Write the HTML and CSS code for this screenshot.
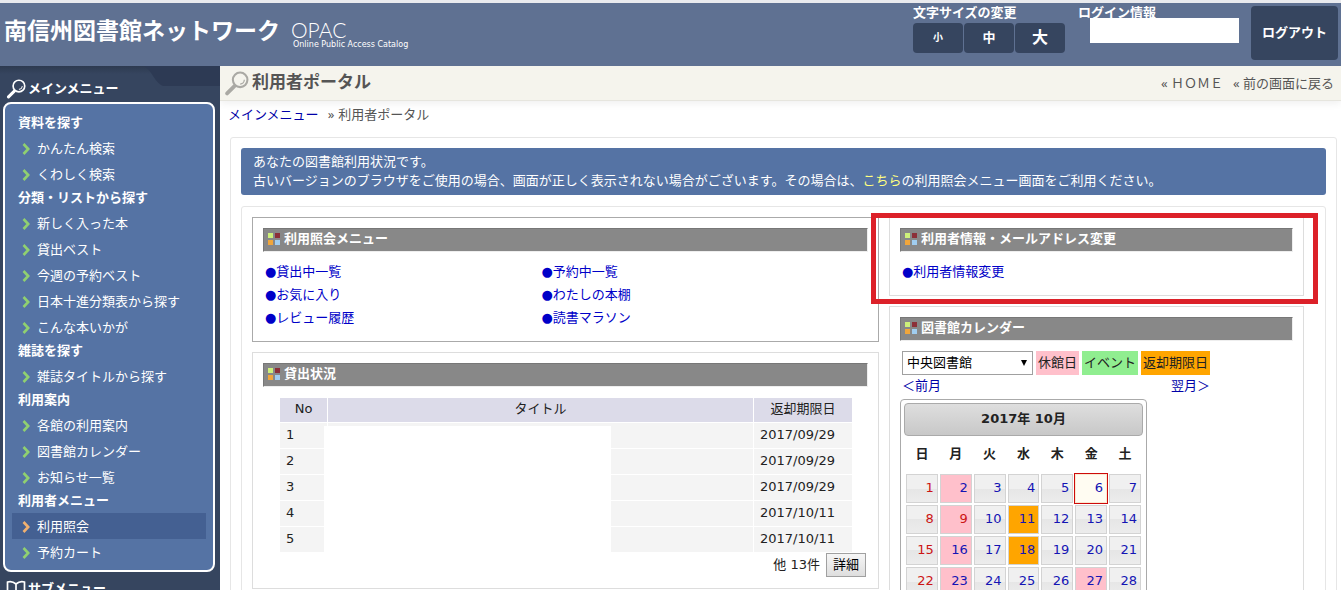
FILE: index.html
```html
<!DOCTYPE html>
<html lang="ja">
<head>
<meta charset="utf-8">
<title>利用者ポータル - 南信州図書館ネットワーク</title>
<link rel="stylesheet" href="styles.css">
</head>
<body>
<svg class="defs" width="0" height="0" aria-hidden="true">
  <symbol id="lens" viewBox="0 0 24 24">
    <circle cx="15.5" cy="8.5" r="7" fill="none" stroke="currentColor" stroke-width="2"/>
    <path d="M10 14.500 3 21.500" fill="none" stroke="currentColor" stroke-width="3.600" stroke-linecap="round"/>
    <path d="M19.500 8.500a4 4 0 0 1-4 4" fill="none" stroke="currentColor" stroke-width="1.200"/>
  </symbol>
  <symbol id="tiles" viewBox="0 0 12 12">
    <path d="M0 0h5v5H0z" fill="#cdf07a"/><path d="M7 0h5v5H7z" fill="#8c2f38"/>
    <path d="M0 7h5v5H0z" fill="#f0a63c"/><path d="M7 7h5v5H7z" fill="#a0cdf0"/>
  </symbol>
  <symbol id="chevron" viewBox="0 0 8 12">
    <path d="M1.500 1 6.200 6 1.500 11" fill="none" stroke="currentColor" stroke-width="2.600"/>
  </symbol>
</svg>

<header class="site-header">
  <h1 class="site-name">南信州図書館ネットワーク</h1>
  <div class="opac">
    <span class="opac-name">OPAC</span>
    <span class="opac-sub">Online Public Access Catalog</span>
  </div>
  <div class="font-size">
    <span class="header-label">文字サイズの変更</span>
    <div class="size-buttons">
      <button class="dark-button size-s">小</button>
      <button class="dark-button size-m">中</button>
      <button class="dark-button size-l">大</button>
    </div>
  </div>
  <div class="login">
    <span class="header-label">ログイン情報</span>
    <div class="login-name"></div>
  </div>
  <button class="dark-button logout">ログアウト</button>
</header>

<div class="layout">
  <nav class="sidebar">
    <svg class="sidebar-fold" viewBox="0 0 76 20" preserveAspectRatio="none" aria-hidden="true"><path d="M0 0h76v20H19Q14 18 9 10 5 3 0 0z" fill="#2d3a54"/></svg>
    <h2 class="menu-title"><svg class="menu-icon"><use href="#lens"/></svg>メインメニュー</h2>
    <div class="menu-box">
      <h3>資料を探す</h3>
      <ul>
        <li><a href="#"><svg><use href="#chevron"/></svg>かんたん検索</a></li>
        <li><a href="#"><svg><use href="#chevron"/></svg>くわしく検索</a></li>
      </ul>
      <h3>分類・リストから探す</h3>
      <ul>
        <li><a href="#"><svg><use href="#chevron"/></svg>新しく入った本</a></li>
        <li><a href="#"><svg><use href="#chevron"/></svg>貸出ベスト</a></li>
        <li><a href="#"><svg><use href="#chevron"/></svg>今週の予約ベスト</a></li>
        <li><a href="#"><svg><use href="#chevron"/></svg>日本十進分類表から探す</a></li>
        <li><a href="#"><svg><use href="#chevron"/></svg>こんな本いかが</a></li>
      </ul>
      <h3>雑誌を探す</h3>
      <ul>
        <li><a href="#"><svg><use href="#chevron"/></svg>雑誌タイトルから探す</a></li>
      </ul>
      <h3>利用案内</h3>
      <ul>
        <li><a href="#"><svg><use href="#chevron"/></svg>各館の利用案内</a></li>
        <li><a href="#"><svg><use href="#chevron"/></svg>図書館カレンダー</a></li>
        <li><a href="#"><svg><use href="#chevron"/></svg>お知らせ一覧</a></li>
      </ul>
      <h3>利用者メニュー</h3>
      <ul>
        <li><a href="#" class="active"><svg><use href="#chevron"/></svg>利用照会</a></li>
        <li><a href="#"><svg><use href="#chevron"/></svg>予約カート</a></li>
      </ul>
    </div>
    <h2 class="menu-title sub-title"><svg class="menu-icon" viewBox="0 0 20 20" fill="none" stroke="currentColor" stroke-width="1.700"><path d="M10 5Q6 1.500 1.500 3v13Q6 14.500 10 18 14 14.500 18.500 16V3Q14 1.500 10 5zM10 5v13"/></svg>サブメニュー</h2>
  </nav>

  <main class="main">
    <div class="page-head">
      <svg class="page-icon"><use href="#lens"/></svg>
      <h2>利用者ポータル</h2>
      <div class="page-links"><a href="#">« ＨＯＭＥ</a><a href="#">« 前の画面に戻る</a></div>
    </div>
    <div class="breadcrumb"><a href="#">メインメニュー</a><span>»</span>利用者ポータル</div>

    <div class="frame">
      <p class="notice">あなたの図書館利用状況です。<br>古いバージョンのブラウザをご使用の場合、画面が正しく表示されない場合がございます。その場合は、<a href="#">こちら</a>の利用照会メニュー画面をご利用ください。</p>

      <div class="columns">
        <div class="col-left">
          <section class="panel panel-strong">
            <h3 class="bar"><svg><use href="#tiles"/></svg>利用照会メニュー</h3>
            <ul class="links two">
              <li><a href="#">●貸出中一覧</a></li><li><a href="#">●予約中一覧</a></li>
              <li><a href="#">●お気に入り</a></li><li><a href="#">●わたしの本棚</a></li>
              <li><a href="#">●レビュー履歴</a></li><li><a href="#">●読書マラソン</a></li>
            </ul>
          </section>
          <section class="panel">
            <h3 class="bar"><svg><use href="#tiles"/></svg>貸出状況</h3>
            <div class="loans">
              <table>
                <thead><tr><th class="c-no">No</th><th>タイトル</th><th class="c-date">返却期限日</th></tr></thead>
                <tbody>
                  <tr><td>1</td><td></td><td>2017/09/29</td></tr>
                  <tr><td>2</td><td></td><td>2017/09/29</td></tr>
                  <tr><td>3</td><td></td><td>2017/09/29</td></tr>
                  <tr><td>4</td><td></td><td>2017/10/11</td></tr>
                  <tr><td>5</td><td></td><td>2017/10/11</td></tr>
                </tbody>
              </table>
              <div class="blank"></div>
            </div>
            <div class="more">他 13件<button class="plain-button">詳細</button></div>
          </section>
        </div>

        <div class="col-right">
          <section class="panel marked">
            <h3 class="bar"><svg><use href="#tiles"/></svg>利用者情報・メールアドレス変更</h3>
            <ul class="links"><li><a href="#">●利用者情報変更</a></li></ul>
            <div class="marker"></div>
          </section>
          <section class="panel">
            <h3 class="bar"><svg><use href="#tiles"/></svg>図書館カレンダー</h3>
            <div class="calendar-tools">
              <div class="select-wrap">
                <select aria-label="図書館"><option>中央図書館</option></select>
                <span class="arrow" aria-hidden="true"></span>
              </div>
              <span class="tag closed">休館日</span>
              <span class="tag event">イベント</span>
              <span class="tag due">返却期限日</span>
            </div>
            <div class="month-nav"><a href="#">＜前月</a><a href="#">翌月＞</a></div>
            <div class="calendar">
              <div class="month">2017年 10月</div>
              <table>
                <thead><tr><th>日</th><th>月</th><th>火</th><th>水</th><th>木</th><th>金</th><th>土</th></tr></thead>
                <tbody>
                  <tr><td class="sun">1</td><td class="closed">2</td><td>3</td><td>4</td><td>5</td><td class="today">6</td><td>7</td></tr>
                  <tr><td class="sun">8</td><td class="closed sun">9</td><td>10</td><td class="due">11</td><td>12</td><td>13</td><td>14</td></tr>
                  <tr><td class="sun">15</td><td class="closed">16</td><td>17</td><td class="due">18</td><td>19</td><td>20</td><td>21</td></tr>
                  <tr><td class="sun">22</td><td class="closed">23</td><td>24</td><td>25</td><td>26</td><td class="closed">27</td><td>28</td></tr>
                </tbody>
              </table>
            </div>
          </section>
        </div>
      </div>
    </div>
  </main>
</div>
</body>
</html>
```
FILE: styles.css
```css
* { box-sizing: border-box; }

body {
  margin: 0;
  height: 100vh;
  overflow: hidden;
  display: flex;
  flex-direction: column;
  background: #fff;
  color: #222;
  font: 13px/20px "DejaVu Sans", "Noto Sans CJK JP", sans-serif;
}

h1, h2, h3, p, ul { margin: 0; padding: 0; }
ul { list-style: none; }
a { color: #0000a8; text-decoration: none; }
button, select { font: inherit; }
.defs { position: absolute; }

/* Header */
.site-header {
  position: relative;
  z-index: 1;
  flex: none;
  display: flex;
  align-items: flex-start;
  height: 66px;
  padding: 0 3px 0 4px;
  border-top: 3px solid #e9eaee;
  background: #5f7192;
  color: #fff;
}
.site-name { padding-top: 12px; font-size: 23px; line-height: 32px; white-space: nowrap; }
.opac { display: flex; flex-direction: column; padding: 16px 0 0 11px; white-space: nowrap; }
.opac-name { font: 300 21px/21px Lato, sans-serif; }
.opac-sub { padding-left: 2px; font: 8px/10px "DejaVu Sans", sans-serif; }
.header-label { display: block; font-weight: bold; line-height: 20px; }
.font-size { margin-left: auto; }
.size-buttons { display: flex; gap: 1px; }
.dark-button {
  border: 0;
  border-radius: 4px;
  padding: 0;
  background: #36455f;
  color: #fff;
  font-weight: bold;
}
.size-buttons .dark-button { width: 50px; height: 30px; }
.size-buttons .size-s { font-size: 10px; }
.size-buttons .size-m { font-size: 13px; }
.size-buttons .size-l { font-size: 16px; }
.login { width: 161px; margin: 0 12px 0 13px; }
.login .header-label { height: 15px; }
.login-name { position: relative; height: 25px; margin-left: 12px; background: #fff; }
.logout { width: 87px; height: 54px; margin-top: 3px; }

/* Sidebar */
.layout { flex: 1; display: flex; min-height: 0; }
.sidebar {
  position: relative;
  flex: none;
  width: 220px;
  padding: 10px 5px 0 3px;
  overflow: hidden;
  background: linear-gradient(#2d3a50, #36455f 8px);
}
.sidebar-fold { position: absolute; top: 0; right: 0; width: 76px; height: 20px; }
.menu-title {
  position: relative;
  display: flex;
  align-items: center;
  gap: 2px;
  height: 26px;
  padding-left: 3px;
  color: #fff;
  font-size: 13px;
}
.menu-icon { width: 20px; height: 20px; }
.sub-title { margin-top: 4px; }
.menu-box {
  padding: 8px 7px 5px;
  border: 2px solid #fff;
  border-radius: 8px;
  background: #5573a4;
  color: #fff;
}
.menu-box h3 { padding: 1px 0 2px 6px; font-size: 13px; line-height: 20px; }
.menu-box a {
  display: flex;
  align-items: center;
  gap: 7px;
  height: 26px;
  padding: 2px 0 0 10px;
  color: #fff;
}
.menu-box svg { width: 8px; height: 12px; color: #90d070; }
.menu-box .active { background: #446092; }
.menu-box .active svg { color: #f0b070; }

/* Page */
.main { flex: 1; min-width: 0; }
.page-head {
  display: flex;
  align-items: center;
  height: 35px;
  padding: 0 7px 0 4px;
  border-bottom: 1px solid #e6e5de;
  background: #f5f4ed;
  box-shadow: 0 2px 8px #eee;
}
.page-head h2 { padding: 0 0 2px 3px; color: #555; font-size: 17px; line-height: 24px; }
.page-icon { width: 25px; height: 25px; color: #aaa9a4; }
.page-links { display: flex; gap: 10px; margin-left: auto; font-family: "Noto Sans", "Noto Sans CJK JP", sans-serif; }
.page-links a { color: #555; }
.breadcrumb { padding: 3px 8px 0; color: #555; }
.breadcrumb span { margin: 0 4px 0 9px; font-family: "Noto Sans", sans-serif; }

.frame {
  margin: 12px 4px 0 10px;
  padding: 10px;
  border: 1px solid #e6e6e6;
  border-radius: 3px;
}
.notice {
  padding: 4px 12px 5px;
  border-radius: 3px;
  background: #5573a4;
  color: #fff;
  line-height: 19px;
  white-space: nowrap;
}
.notice a { color: #ffff80; }
.columns {
  display: flex;
  gap: 10px;
  align-items: flex-start;
  margin-top: 11px;
  padding: 10px 21px 10px 10px;
  border: 1px solid #e6e6e6;
  border-radius: 3px;
}
.col-left, .col-right { display: flex; flex-direction: column; gap: 10px; min-width: 0; }
.col-left { flex: 627 0 0; }
.col-right { flex: 415 0 0; }
.panel { padding: 10px; border: 1px solid #ddd; background: #fff; }
.panel-strong { border-color: #aaa; }
.bar {
  display: flex;
  align-items: center;
  gap: 4px;
  height: 24px;
  padding: 0 0 2px 4px;
  border: 1px solid #777;
  border-right-color: #eee;
  border-bottom-color: #eee;
  background: #888;
  color: #fff;
  font-size: 13px;
  line-height: 20px;
}
.bar svg { width: 12px; height: 12px; }
.links { padding: 8px 2px 2px; line-height: 23px; }
.links a { color: #0000c8; }
.two { display: grid; grid-template-columns: 46% 1fr; }

/* Loans */
.loans { position: relative; margin: 11px 15px 0 17px; }
.loans table { width: 100%; border-collapse: separate; border-spacing: 0; table-layout: fixed; }
.loans th {
  height: 24px;
  padding: 0 0 2px;
  border-right: 1px solid #fff;
  background: #dcdbe9;
  font-weight: normal;
}
.loans td {
  height: 26px;
  padding: 0 6px 1px;
  border-top: 1px solid #fff;
  border-right: 1px solid #fff;
  background: #f4f4f4;
}
.c-no { width: 48px; }
.c-date { width: 99px; }
.blank { position: absolute; top: 28px; bottom: 0; left: 44px; width: 50%; background: #fff; }
.more { display: flex; justify-content: flex-end; align-items: center; gap: 6px; padding: 1px 2px 1px 0; }
.plain-button {
  width: 40px;
  height: 24px;
  padding: 0;
  border: 1px solid #a0a0a0;
  background: linear-gradient(#f6f6f6, #dedede);
  color: #000;
}

/* Marked panel */
.marked { position: relative; }
.marker {
  position: absolute;
  top: -5px;
  right: -15px;
  bottom: -9px;
  left: -19px;
  border: 5px solid #dc2129;
}

/* Calendar */
.calendar-tools { display: flex; gap: 3px; padding: 10px 2px 0; }
.select-wrap { position: relative; width: 131px; }
.select-wrap select {
  width: 100%;
  height: 24px;
  padding: 0 4px;
  appearance: none;
  border: 1px solid #a0a0a0;
  border-radius: 0;
  background: #fff;
  color: #000;
}
.arrow {
  position: absolute;
  top: 9px;
  right: 6px;
  border: 3px solid transparent;
  border-top: 6px solid #000;
  border-bottom: 0;
}
.tag { height: 24px; padding: 0 2px; line-height: 24px; white-space: nowrap; }
.closed { background: #ffc0cb; }
.event { background: #90ee90; }
.due { background: #ffa500; }
.month-nav { display: flex; justify-content: space-between; width: 310px; padding: 1px 0 0 2px; }
.calendar {
  width: 247px;
  margin-top: 3px;
  padding: 3px;
  border: 1px solid #aaa;
  border-radius: 4px;
}
.month {
  height: 33px;
  border: 1px solid #aaa;
  border-radius: 4px;
  background: linear-gradient(#dedede, #c8c8c8);
  font-weight: bold;
  line-height: 30px;
  text-align: center;
}
.calendar table { width: 100%; border-collapse: separate; border-spacing: 2px; table-layout: fixed; }
.calendar th { height: 34px; padding: 0 0 2px; }
.calendar td {
  height: 29px;
  padding: 0 3px 2px 0;
  border: 1px solid #d3d3d3;
  background: linear-gradient(#f0f0f0 50%, #e6e6e6 50%, #ececec);
  color: #1414b4;
  text-align: right;
}
.calendar td.sun { color: #cc1414; }
.calendar td.closed { background: #ffc0cb; }
.calendar td.due { background: #ffa500; }
.calendar td.today { outline: 1px solid #cd0a0a; border-color: #fbe8d0; background: #fffcf2; }
```
